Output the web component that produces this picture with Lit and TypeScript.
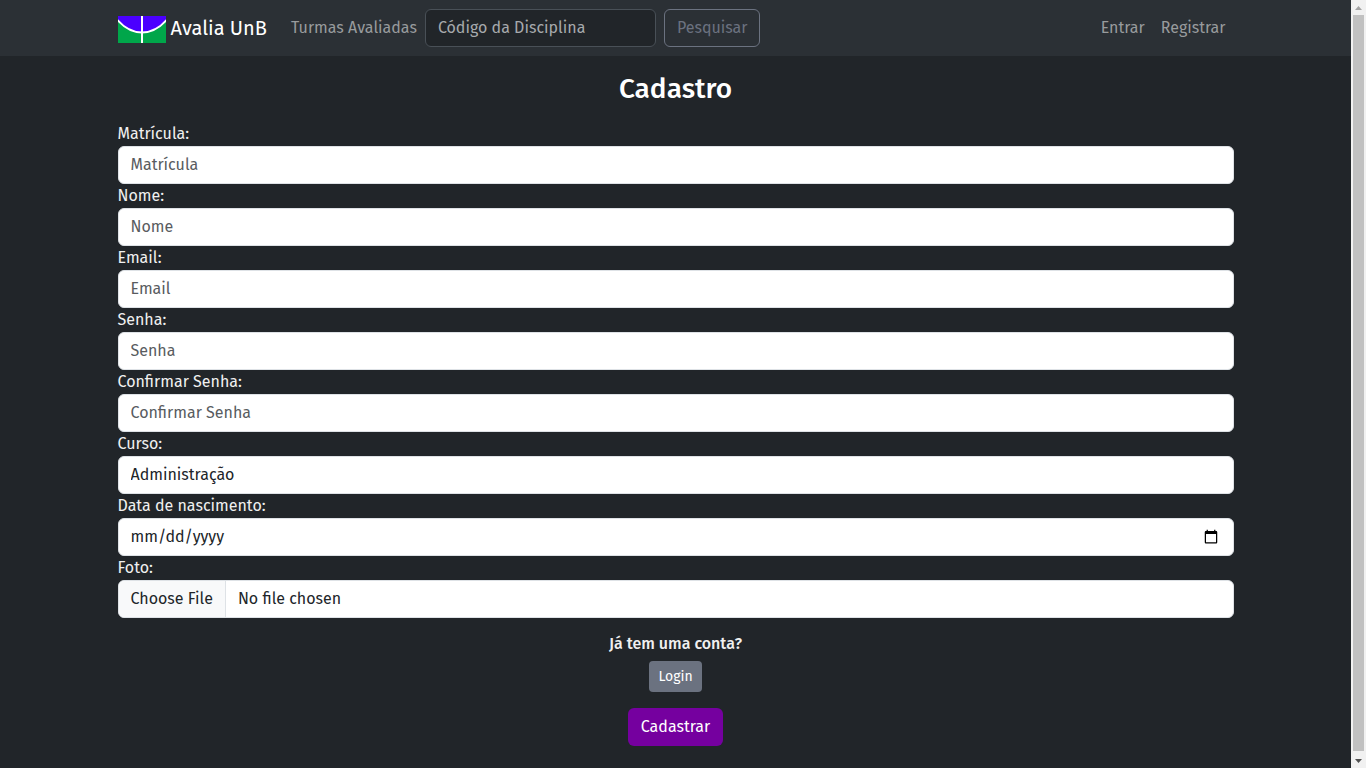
import { LitElement, html, css } from "lit";
import { customElement } from "lit/decorators.js";

interface Field {
  id: string;
  label: string;
  type: string;
}

const TEXT_FIELDS: Field[] = [
  { id: "matricula", label: "Matrícula", type: "text" },
  { id: "nome", label: "Nome", type: "text" },
  { id: "email", label: "Email", type: "email" },
  { id: "senha", label: "Senha", type: "password" },
  { id: "confirmar", label: "Confirmar Senha", type: "password" },
];

@customElement("app-root")
export class AppRoot extends LitElement {
  static styles = css`
    :host {
      display: flex;
      height: 100vh;
      background: #212529;
      color: #f0f0f0;
      font-family: "Fira Sans", "Noto Sans", sans-serif;
      font-size: 16px;
      line-height: 24px;
    }
    * {
      box-sizing: border-box;
    }
    .page {
      flex: 1;
      min-width: 0;
      overflow: hidden;
    }
    .container {
      max-width: 1140px;
      margin: 0 auto;
      padding: 0 12px;
    }
    .navbar {
      background: #2b3035;
    }
    .bar {
      display: flex;
      align-items: center;
      height: 56px;
    }
    .brand {
      display: flex;
      align-items: flex-end;
      gap: 5px;
      margin-right: 16px;
      color: #fff;
      font-size: 20px;
      line-height: 30px;
      text-decoration: none;
      white-space: nowrap;
    }
    .logo {
      display: block;
      width: 48px;
      height: 27px;
    }
    .nav-link {
      padding: 8px;
      color: #989b9d;
      text-decoration: none;
      white-space: nowrap;
    }
    .search {
      display: flex;
      gap: 8px;
      margin-right: auto;
    }
    .control {
      display: block;
      width: 100%;
      height: 38px;
      margin: 0;
      padding: 6px 12px;
      border: 1px solid #dee2e6;
      border-radius: 6px;
      background: #fff;
      color: #212529;
      font: inherit;
      appearance: none;
    }
    .text {
      padding: 5px 12px 7px;
    }
    .control::placeholder {
      color: #595c5f;
      opacity: 1;
    }
    .search .control {
      width: 231px;
      border-color: #495057;
      background: #212529;
      color: #dee2e6;
    }
    .search .control::placeholder {
      color: #a7aaad;
    }
    .date::-webkit-datetime-edit,
    .date::-webkit-datetime-edit-fields-wrapper,
    .date::-webkit-datetime-edit-text,
    .date::-webkit-datetime-edit-month-field,
    .date::-webkit-datetime-edit-day-field,
    .date::-webkit-datetime-edit-year-field {
      padding: 0;
    }
    .file {
      overflow: hidden;
    }
    .file::file-selector-button {
      margin: -6px 12px -6px -12px;
      padding: 6px 12px;
      border: 0 solid #dee2e6;
      border-right-width: 1px;
      border-radius: 0;
      background: #f8f9fa;
      color: #212529;
      font: inherit;
    }
    .btn {
      display: inline-block;
      padding: 6px 12px;
      border: 1px solid transparent;
      border-radius: 6px;
      color: #fff;
      font: inherit;
      text-decoration: none;
    }
    .btn-outline {
      border-color: #6b7280;
      background: transparent;
      color: #6b7280;
    }
    .btn-small {
      padding: 4px 8px;
      border-radius: 4px;
      background: #6b7280;
      font-size: 14px;
      line-height: 21px;
    }
    .btn-primary {
      background: #75009f;
    }
    .title {
      margin: 16px 0;
      color: #fff;
      font-size: 28px;
      font-weight: 500;
      line-height: 34px;
      text-align: center;
    }
    .label {
      display: block;
    }
    .actions {
      display: flex;
      flex-direction: column;
      align-items: center;
      padding: 14px 0 16px;
    }
    .question {
      margin: 0 0 5px;
      font-size: 16px;
      font-weight: 500;
    }
    .actions .btn-primary {
      margin-top: 16px;
    }
    .scrollbar {
      display: flex;
      flex-direction: column;
      width: 15px;
      background: #f1f1f1;
    }
    .arrow {
      display: block;
      width: 15px;
      height: 15px;
    }
    .track {
      flex: 1;
      padding: 0 2px 2px;
    }
    .thumb {
      height: 100%;
      background: #c1c1c1;
    }
  `;

  render() {
    return html`
      <div class="page">
        <header class="navbar">
          <nav class="container bar">
            <a class="brand" href="#">
              <svg class="logo" viewBox="0 0 48 27" aria-hidden="true">
                <rect width="48" height="27" fill="#00a64a" />
                <path d="M0 0H48V4.500C34 20.500 14 20.500 0 4.500Z" fill="#4b00ff" />
                <path d="M-1 3.500C14 20.800 34 20.800 49 3.500" fill="none" stroke="#fff" stroke-width="1.8" />
                <path d="M24 0V27" stroke="#fff" stroke-width="2" />
              </svg>
              <span>Avalia UnB</span>
            </a>
            <a class="nav-link" href="#">Turmas Avaliadas</a>
            <form class="search" role="search">
              <input class="control text" type="search" aria-label="Código da Disciplina" placeholder="Código da Disciplina" />
              <button class="btn btn-outline" type="button">Pesquisar</button>
            </form>
            <a class="nav-link" href="#">Entrar</a>
            <a class="nav-link" href="#">Registrar</a>
          </nav>
        </header>
        <main class="container">
          <h1 class="title">Cadastro</h1>
          <form>
            ${TEXT_FIELDS.map(
              (f) => html`
                <label class="label" for=${f.id}>${f.label}:</label>
                <input class="control text" id=${f.id} type=${f.type} placeholder=${f.label} />
              `
            )}
            <label class="label" for="curso">Curso:</label>
            <select class="control" id="curso">
              <option>Administração</option>
            </select>
            <label class="label" for="nascimento">Data de nascimento:</label>
            <input class="control date" id="nascimento" type="date" />
            <label class="label" for="foto">Foto:</label>
            <input class="control file" id="foto" type="file" />
            <div class="actions">
              <h2 class="question">Já tem uma conta?</h2>
              <a class="btn btn-small" href="#">Login</a>
              <button class="btn btn-primary" type="button">Cadastrar</button>
            </div>
          </form>
        </main>
      </div>
      <div class="scrollbar" aria-hidden="true">
        <svg class="arrow" viewBox="0 0 15 15"><path d="M4 10L7.500 6L11 10Z" fill="#a3a3a3" /></svg>
        <div class="track"><div class="thumb"></div></div>
        <svg class="arrow" viewBox="0 0 15 15"><path d="M4 6L7.500 10L11 6Z" fill="#505050" /></svg>
      </div>
    `;
  }
}
